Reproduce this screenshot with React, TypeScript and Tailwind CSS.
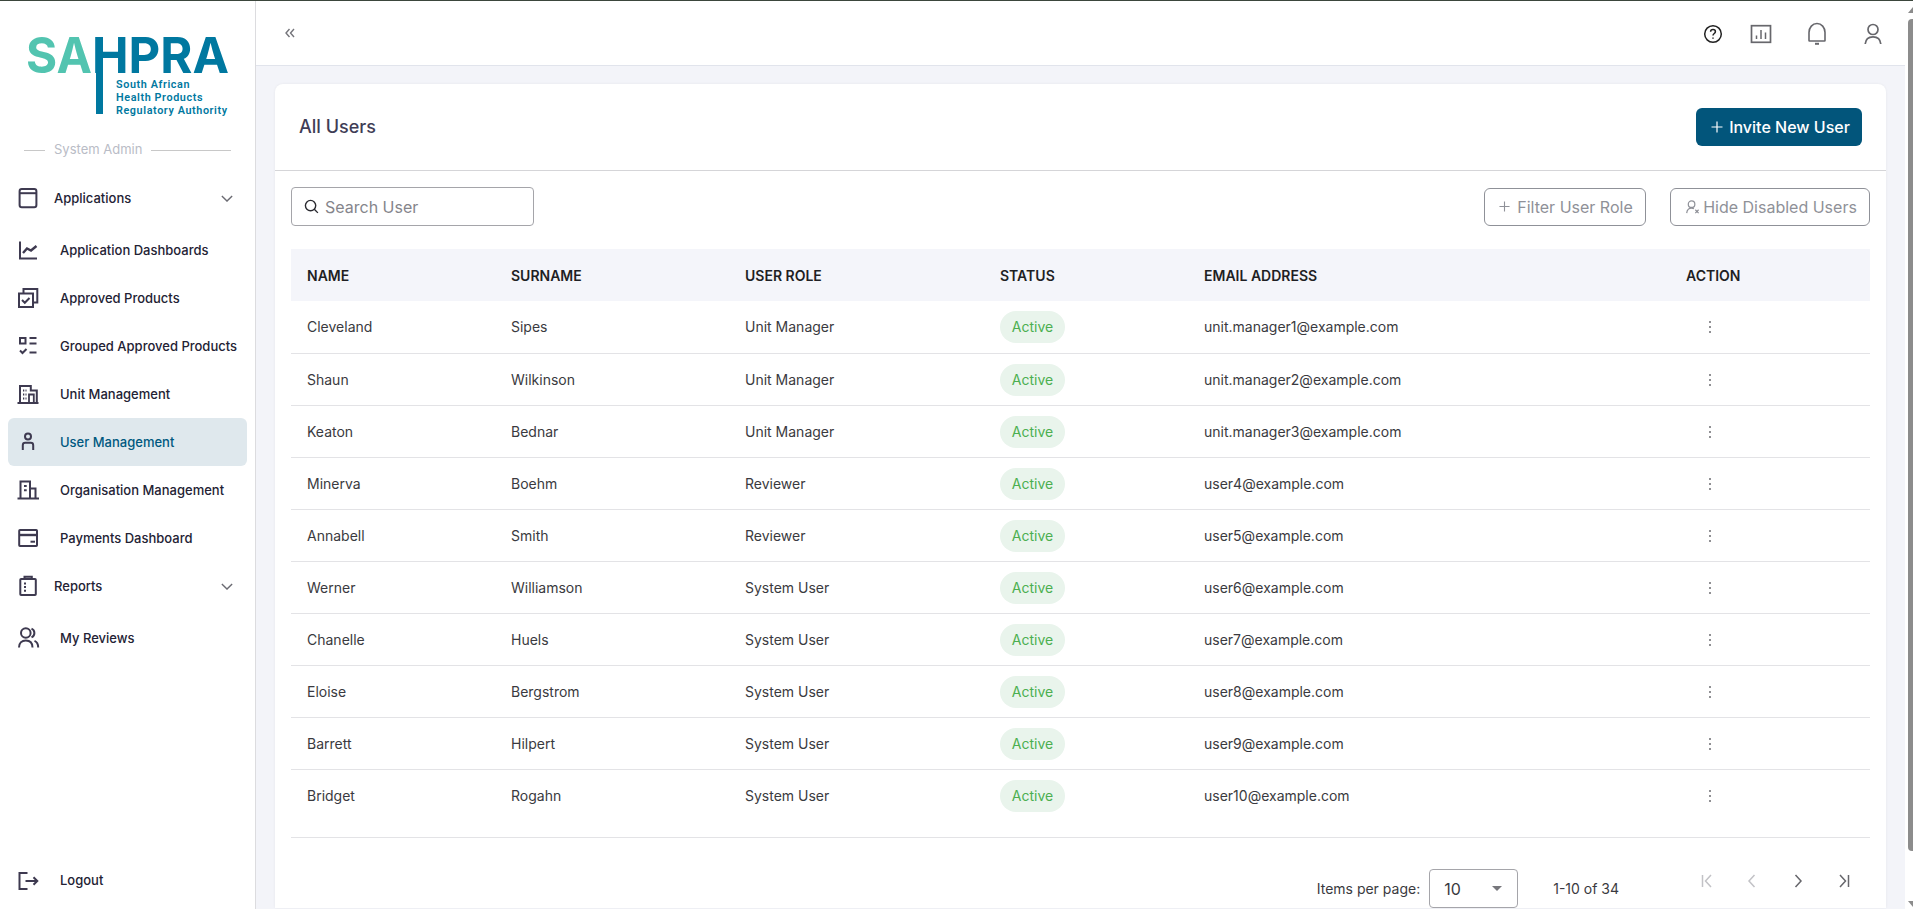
import React from "react";

const S = { fill: "none", stroke: "currentColor", strokeWidth: 2 } as const;

function I({ children, w = 24 }: { children: React.ReactNode; w?: number }) {
  return (
    <svg viewBox="0 0 24 24" width={w} height={w} className="shrink-0 text-[#3e3a50]" {...S}>
      {children}
    </svg>
  );
}

const icons: Record<string, React.ReactNode> = {
  apps: (
    <I>
      <rect x="3.6" y="3" width="16.8" height="18.2" rx="2.2" />
      <path d="M3.6 7.2H20.4" />
    </I>
  ),
  dash: (
    <I>
      <path d="M4 3.5V20.5H21" />
      <path d="M7 15L11 10.5L15 12.5L20.5 8" strokeWidth="2.4" />
    </I>
  ),
  approved: (
    <I>
      <rect x="3" y="7.5" width="14" height="13.5" />
      <path d="M7.5 7.5V3H21.3V16.5H17" />
      <path d="M6 14L8.8 16.8L13.5 12" />
    </I>
  ),
  grouped: (
    <I>
      <rect x="4" y="4" width="5.5" height="5.5" />
      <path d="M13.5 4H20.5M13.5 9.5H20.5M13.5 18.5H20.5" />
      <path d="M4 16.5L6.5 19L10.5 15" />
    </I>
  ),
  unit: (
    <I>
      <path d="M1.5 21H22.5" />
      <path d="M4 21V4H14.8V8.5H20.8V21" />
      <path d="M13 21V12.5H17.8V21" strokeWidth="1.8" />
      <path d="M7 8.5H10.5M7 12.5H10.5M7 16.5H10.5" strokeWidth="1.8" strokeDasharray="1.3 1.2" />
    </I>
  ),
  user: (
    <I>
      <circle cx="12" cy="6.5" r="3" />
      <path d="M6.8 20V15.2Q6.8 12.8 9.2 12.8H14.8Q17.2 12.8 17.2 15.2V20" />
    </I>
  ),
  org: (
    <I>
      <path d="M1.5 20.5H23" />
      <path d="M4.5 20.5V3.5H14V20.5" />
      <path d="M14 10.5H19.5V20.5" />
      <path d="M8 8H10.7M8 12.3H10.7" />
    </I>
  ),
  pay: (
    <I>
      <rect x="3.2" y="4" width="17.8" height="16" rx="0.8" />
      <path d="M3.2 9H21" strokeWidth="2.4" />
      <path d="M14.5 15.7H19" />
    </I>
  ),
  reports: (
    <I>
      <rect x="4.3" y="5" width="15.5" height="16" rx="0.8" />
      <path d="M8.5 5V2.8H15.8V5" />
      <path d="M8 9.5H10M8 13H10M8 16.7H10" />
    </I>
  ),
  reviews: (
    <I>
      <circle cx="9.8" cy="7" r="4.8" />
      <path d="M3 21.5C3 16.8 6 14.5 9.8 14.5S16.5 16.8 16.5 21.5" />
      <path d="M15.5 2.6A4.8 4.8 0 0 1 15.5 11.4" />
      <path d="M18.5 14.8C20.8 15.8 22.2 18 22.2 21.5" />
    </I>
  ),
  logout: (
    <I>
      <path d="M11.5 4H3.5V20H11.5" />
      <path d="M9.5 12H21" />
      <path d="M17.5 8.2L21.3 12L17.5 15.8" />
    </I>
  ),
};

function Chevron() {
  return (
    <svg viewBox="0 0 14 8" width="12" height="7" className="mr-[14px] text-[#6b6b72]" fill="none" stroke="currentColor" strokeWidth="1.6">
      <path d="M1 1L7 7L13 1" />
    </svg>
  );
}

function NavGroup({ icon, label }: { icon: string; label: string }) {
  return (
    <div className="flex h-12 items-center justify-between pl-2">
      <div className="flex items-center gap-[14px] text-[13px] font-medium text-[#232234]">
        {icons[icon]}
        <span className="pt-[2px]">{label}</span>
      </div>
      <Chevron />
    </div>
  );
}

function NavItem({ icon, label, active, flat }: { icon: string; label: string; active?: boolean; flat?: boolean }) {
  return (
    <div
      className={`flex h-12 items-center gap-[20px] rounded-md pl-2 text-[13px] font-medium ${
        active ? "bg-[#dfe8ed] text-[#00587f]" : "text-[#232234]"
      }`}
    >
      {icons[icon]}
      <span className={flat ? "" : "pt-[2px]"}>{label}</span>
    </div>
  );
}

function Logo() {
  return (
    <svg viewBox="0 0 232 116" width="232" height="116" className="block">
      <rect x="96" y="36" width="7" height="77" fill="#0078a0" />
      <text x="26" y="71.5" fontFamily="Inter, sans-serif" fontWeight="700" fontSize="50" fill="#52c4b0" textLength="66" lengthAdjust="spacingAndGlyphs">SA</text>
      <text x="92" y="71.5" fontFamily="Inter, sans-serif" fontWeight="700" fontSize="50" fill="#0078a0" textLength="137" lengthAdjust="spacingAndGlyphs">HPRA</text>
      <g fontFamily="Roboto, sans-serif" fontWeight="600" fontSize="10.8" fill="#0078a0" letterSpacing="0.6">
        <text x="116" y="87">South African</text>
        <text x="116" y="99.5">Health Products</text>
        <text x="116" y="112.5">Regulatory Authority</text>
      </g>
    </svg>
  );
}

function Sidebar() {
  return (
    <aside className="flex w-[256px] shrink-0 flex-col border-r border-[#dcdcdf] bg-white">
      <div className="h-[119px] shrink-0">
        <Logo />
      </div>
      <div className="flex h-[58px] shrink-0 items-center whitespace-nowrap pl-6 pt-[2px] text-[13px] text-[#b9bcc6]">
        <div className="h-px w-[21px] shrink-0 bg-[#c8c8c8]" />
        <span className="mx-[9px] shrink-0">System Admin</span>
        <div className="h-px w-[80px] shrink-0 bg-[#c8c8c8]" />
      </div>
      <div className="-mt-[4px] flex flex-col px-2">
        <NavGroup icon="apps" label="Applications" />
        <div className="mt-1 flex flex-col">
          <NavItem icon="dash" label="Application Dashboards" />
          <NavItem icon="approved" label="Approved Products" />
          <NavItem icon="grouped" label="Grouped Approved Products" />
          <NavItem icon="unit" label="Unit Management" />
          <NavItem icon="user" label="User Management" active />
          <NavItem icon="org" label="Organisation Management" />
          <NavItem icon="pay" label="Payments Dashboard" />
        </div>
        <NavGroup icon="reports" label="Reports" />
        <div className="mt-1">
          <NavItem icon="reviews" label="My Reviews" />
        </div>
      </div>
      <div className="mt-auto px-2 pb-[4px]">
        <NavItem icon="logout" label="Logout" flat />
      </div>
    </aside>
  );
}

function TopBar() {
  return (
    <header className="flex h-[65px] shrink-0 items-center justify-between border-b border-[#e1e4ec] bg-white pl-[29px]">
      <svg viewBox="0 0 10 10" width="10" height="10" fill="none" stroke="#74747a" strokeWidth="1.4">
        <path d="M4.5 1L1 5L4.5 9M9 1L5.5 5L9 9" />
      </svg>
      <div className="flex items-center pt-px">
        <svg viewBox="0 0 20 20" width="20" height="20" fill="none" stroke="#222" strokeWidth="1.5">
          <circle cx="10" cy="10" r="8.3" />
          <path d="M7.6 7.8C7.6 6.4 8.7 5.6 10 5.6S12.4 6.4 12.4 7.7C12.4 9.5 10 9.5 10 11.6" />
          <path d="M10 13.4V14.8" />
        </svg>
        <svg viewBox="0 0 22 20" width="22" height="20" className="ml-[27px]" fill="none" stroke="#67676c" strokeWidth="1.7">
          <rect x="1.5" y="1.7" width="19" height="16.6" />
          <path d="M6.5 15V11.5M11 15V6M15.5 15V8.5" strokeWidth="1.5" />
        </svg>
        <svg viewBox="0 0 20 24" width="20" height="24" className="ml-[35px]" fill="none" stroke="#67676c" strokeWidth="1.6">
          <path d="M2 18.5V10.5C2 5.5 5.5 1.5 10 1.5S18 5.5 18 10.5V18.5Q18 19 17.5 19H2.5Q2 19 2 18.5Z" />
          <path d="M8 21.8H12" strokeWidth="2" />
        </svg>
        <svg viewBox="0 0 18 22" width="18" height="22" className="ml-[37px] mr-[23px]" fill="none" stroke="#67676c" strokeWidth="1.7">
          <circle cx="9" cy="6.5" r="5" />
          <path d="M1.2 21C1.6 16.5 4.5 13.8 9 13.8S16.4 16.5 16.8 21" />
        </svg>
      </div>
    </header>
  );
}

const rows = [
  ["Cleveland", "Sipes", "Unit Manager", "unit.manager1@example.com"],
  ["Shaun", "Wilkinson", "Unit Manager", "unit.manager2@example.com"],
  ["Keaton", "Bednar", "Unit Manager", "unit.manager3@example.com"],
  ["Minerva", "Boehm", "Reviewer", "user4@example.com"],
  ["Annabell", "Smith", "Reviewer", "user5@example.com"],
  ["Werner", "Williamson", "System User", "user6@example.com"],
  ["Chanelle", "Huels", "System User", "user7@example.com"],
  ["Eloise", "Bergstrom", "System User", "user8@example.com"],
  ["Barrett", "Hilpert", "System User", "user9@example.com"],
  ["Bridget", "Rogahn", "System User", "user10@example.com"],
];

const COLS = "grid grid-cols-[220px_234px_255px_204px_482px_1fr] items-center";

function Table() {
  return (
    <div className="mt-[23px] text-sm">
      <div className={`${COLS} h-[52px] bg-[#f4f5fa] pt-[2px] font-semibold text-[#1f1f24]`}>
        <span className="pl-4">NAME</span>
        <span>SURNAME</span>
        <span>USER ROLE</span>
        <span>STATUS</span>
        <span>EMAIL ADDRESS</span>
        <span>ACTION</span>
      </div>
      {rows.map((r, i) => (
        <div
          key={r[0]}
          className={`${COLS} text-[#3a3a40] ${i === 0 ? "h-[53px]" : "h-[52px]"} ${i < 9 ? "border-b border-[#e3e3e6]" : ""}`}
        >
          <span className="pl-4">{r[0]}</span>
          <span>{r[1]}</span>
          <span>{r[2]}</span>
          <span>
            <span className="inline-flex h-8 w-[65px] items-center justify-center rounded-full bg-[#e9f4ec] text-[#4caf50]">Active</span>
          </span>
          <span>{r[3]}</span>
          <span className="pl-[22px]">
            <svg viewBox="0 0 4 14" width="4" height="14" fill="#6b6b70">
              <circle cx="2" cy="2" r="1" />
              <circle cx="2" cy="7" r="1" />
              <circle cx="2" cy="12" r="1" />
            </svg>
          </span>
        </div>
      ))}
    </div>
  );
}

function PageBtn({ d, color }: { d: string; color: string }) {
  return (
    <div className="flex h-6 w-[46px] items-center justify-center">
      <svg viewBox="0 0 16 16" width="16" height="16" fill="none" stroke={color} strokeWidth="1.5">
        <path d={d} />
      </svg>
    </div>
  );
}

function Pagination() {
  return (
    <div className="mt-[15px] flex items-start justify-end border-t border-[#e3e3e6] pr-[3px] pt-[31px] text-sm text-[#3a3a40]">
      <span className="mt-[10px]">Items per page:</span>
      <div className="ml-[9px] flex h-[39px] w-[89px] items-center justify-between rounded border border-[#a5a5aa] pl-[14px] pr-[15px] text-base">
        <span>10</span>
        <svg viewBox="0 0 10 5" width="10" height="5" fill="#77777c">
          <path d="M0 0H10L5 5Z" />
        </svg>
      </div>
      <span className="ml-[35px] mt-[10px]">1-10 of 34</span>
      <div className="ml-[64px] flex">
        <PageBtn d="M4.5 2V14M13 2L7.5 8L13 14" color="#c2c2c6" />
        <PageBtn d="M10.5 2L5 8L10.5 14" color="#c2c2c6" />
        <PageBtn d="M5.5 2L11 8L5.5 14" color="#66666b" />
        <PageBtn d="M4 2L9.5 8L4 14M12.5 2V14" color="#66666b" />
      </div>
    </div>
  );
}

function Card() {
  return (
    <section className="mx-[19px] mt-[18px] rounded-t-lg bg-white shadow-[0_0_3px_rgba(0,0,0,0.06)]">
      <div className="flex h-[87px] items-center justify-between border-b border-[#d5d5d8] pl-6 pr-6">
        <h1 className="text-lg font-medium text-[#3f3d56]">All Users</h1>
        <button className="flex h-[38px] w-[166px] items-center justify-center gap-[6px] rounded-md bg-[#02557b] pl-[3px] text-base font-medium text-white">
          <svg viewBox="0 0 12 12" width="12" height="12" fill="none" stroke="#fff" strokeWidth="1.2">
            <path d="M6 0.5V11.5M0.5 6H11.5" />
          </svg>
          Invite New User
        </button>
      </div>
      <div className="px-4 pt-4">
        <div className="flex items-center justify-between">
          <div className="flex h-[39px] w-[243px] items-center gap-[6px] rounded border border-[#a5a5aa] pl-[12px] text-base text-[#85858b]">
            <svg viewBox="0 0 16 16" width="15" height="15" fill="none" stroke="#2a2a30" strokeWidth="1.5">
              <circle cx="7" cy="7" r="5.5" />
              <path d="M11 11L14.8 14.8" />
            </svg>
            Search User
          </div>
          <div className="flex gap-6 text-base text-[#8f9198]">
            <button className="flex h-[38px] w-[162px] items-center justify-center gap-[7px] rounded-md border border-[#8f9198] pl-[2px]">
              <svg viewBox="0 0 12 12" width="11" height="11" fill="none" stroke="#8f9198" strokeWidth="1.2">
                <path d="M6 0.5V11.5M0.5 6H11.5" />
              </svg>
              Filter User Role
            </button>
            <button className="flex h-[38px] w-[200px] items-center justify-center gap-[3px] rounded-md border border-[#8f9198] pl-[2px]">
              <svg viewBox="0 0 16 16" width="15" height="15" fill="none" stroke="#8f9198" strokeWidth="1.3">
                <circle cx="7" cy="5.5" r="3.5" />
                <path d="M1.8 15C2.2 11.5 4 9.7 7 9.7C8 9.7 8.8 9.9 9.5 10.3" />
                <path d="M11 11.5L14.5 15M14.5 11.5L11 15" />
              </svg>
              Hide Disabled Users
            </button>
          </div>
        </div>
        <Table />
        <Pagination />
      </div>
    </section>
  );
}

function Scrollbar() {
  return (
    <div className="flex w-2 shrink-0 flex-col items-end bg-white">
      <svg viewBox="0 0 5 6" width="5" height="6" className="mt-[6px]" fill="#8c8c8c">
        <path d="M0 6L5 0V6Z" />
      </svg>
      <div className="mt-[6px] h-[832px] w-[5px] rounded-l-sm bg-[#8c8c8c]" />
      <svg viewBox="0 0 5 6" width="5" height="6" className="mt-[50px]" fill="#8c8c8c">
        <path d="M0 0L5 6V0Z" />
      </svg>
    </div>
  );
}

export default function App() {
  return (
    <div className="flex h-[909px] w-full flex-col overflow-hidden bg-[#f3f4f9] font-[Inter,sans-serif]">
      <div className="h-px shrink-0 bg-[#3b463c]" />
      <div className="flex min-h-0 flex-1">
        <Sidebar />
        <main className="flex min-w-0 flex-1 flex-col overflow-hidden">
          <TopBar />
          <Card />
        </main>
        <Scrollbar />
      </div>
    </div>
  );
}
